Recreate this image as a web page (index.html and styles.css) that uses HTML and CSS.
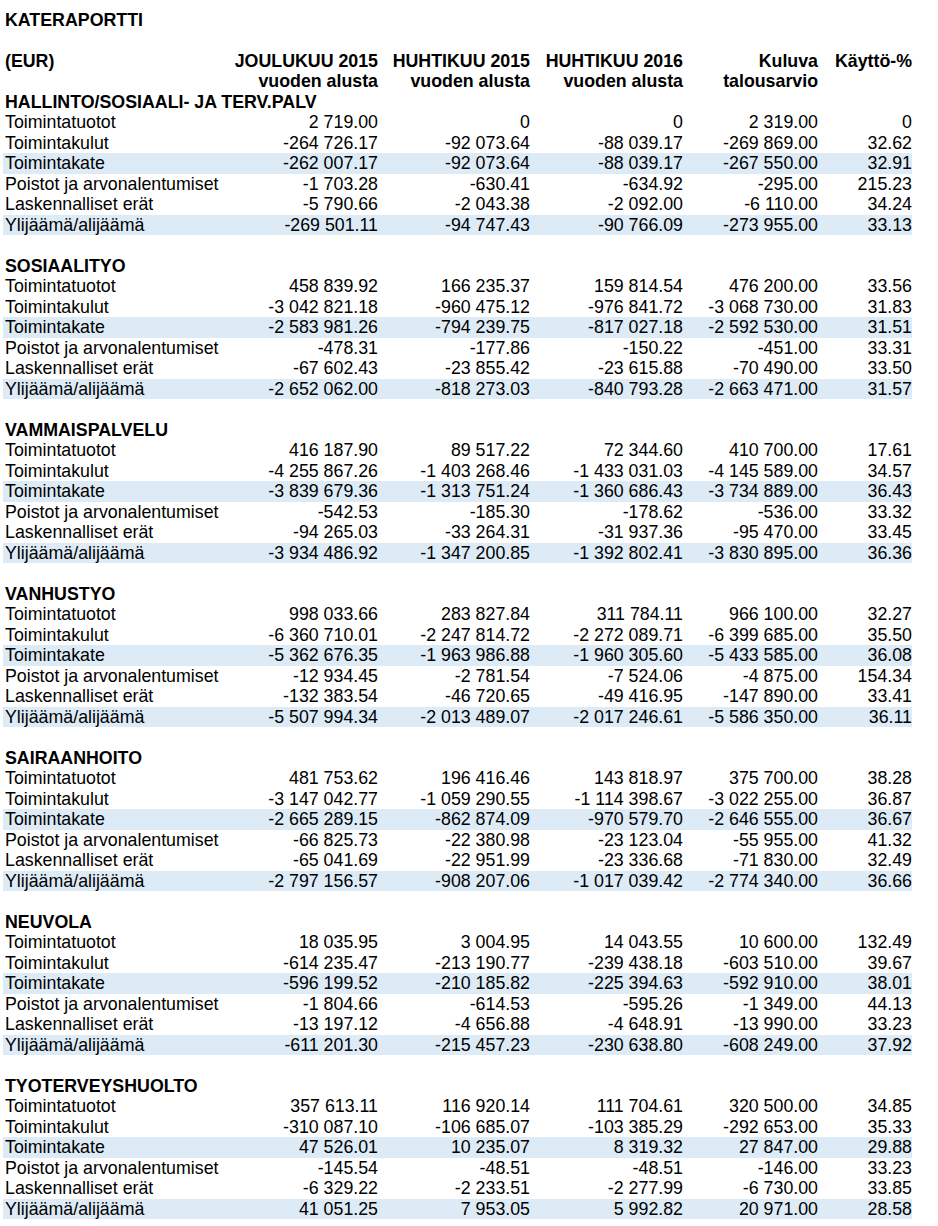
FILE: index.html
```html
<!DOCTYPE html>
<html lang="fi">
<head>
<meta charset="utf-8">
<title>Kateraportti</title>
<link rel="stylesheet" href="styles.css">
</head>
<body>
<table class="report">
<colgroup>
<col class="c-label"><col class="c-dec"><col class="c-apr15"><col class="c-apr16"><col class="c-bud"><col class="c-pct">
</colgroup>
<tbody>
<tr class="b"><td class="lbl" colspan="6">KATERAPORTTI</td></tr>
<tr><td class="lbl" colspan="6"></td></tr>
<tr class="b"><td class="lbl">(EUR)</td><td>JOULUKUU 2015</td><td>HUHTIKUU 2015</td><td>HUHTIKUU 2016</td><td>Kuluva</td><td>Käyttö-%</td></tr>
<tr class="b"><td class="lbl"></td><td>vuoden alusta</td><td>vuoden alusta</td><td>vuoden alusta</td><td>talousarvio</td><td></td></tr>

<tr class="b"><td class="lbl" colspan="6">HALLINTO/SOSIAALI- JA TERV.PALV</td></tr>
<tr><td class="lbl">Toimintatuotot</td><td>2 719.00</td><td>0</td><td>0</td><td>2 319.00</td><td>0</td></tr>
<tr><td class="lbl">Toimintakulut</td><td>-264 726.17</td><td>-92 073.64</td><td>-88 039.17</td><td>-269 869.00</td><td>32.62</td></tr>
<tr class="band"><td class="lbl">Toimintakate</td><td>-262 007.17</td><td>-92 073.64</td><td>-88 039.17</td><td>-267 550.00</td><td>32.91</td></tr>
<tr><td class="lbl">Poistot ja arvonalentumiset</td><td>-1 703.28</td><td>-630.41</td><td>-634.92</td><td>-295.00</td><td>215.23</td></tr>
<tr><td class="lbl">Laskennalliset erät</td><td>-5 790.66</td><td>-2 043.38</td><td>-2 092.00</td><td>-6 110.00</td><td>34.24</td></tr>
<tr class="band"><td class="lbl">Ylijäämä/alijäämä</td><td>-269 501.11</td><td>-94 747.43</td><td>-90 766.09</td><td>-273 955.00</td><td>33.13</td></tr>
<tr><td class="lbl" colspan="6"></td></tr>

<tr class="b"><td class="lbl" colspan="6">SOSIAALITYO</td></tr>
<tr><td class="lbl">Toimintatuotot</td><td>458 839.92</td><td>166 235.37</td><td>159 814.54</td><td>476 200.00</td><td>33.56</td></tr>
<tr><td class="lbl">Toimintakulut</td><td>-3 042 821.18</td><td>-960 475.12</td><td>-976 841.72</td><td>-3 068 730.00</td><td>31.83</td></tr>
<tr class="band"><td class="lbl">Toimintakate</td><td>-2 583 981.26</td><td>-794 239.75</td><td>-817 027.18</td><td>-2 592 530.00</td><td>31.51</td></tr>
<tr><td class="lbl">Poistot ja arvonalentumiset</td><td>-478.31</td><td>-177.86</td><td>-150.22</td><td>-451.00</td><td>33.31</td></tr>
<tr><td class="lbl">Laskennalliset erät</td><td>-67 602.43</td><td>-23 855.42</td><td>-23 615.88</td><td>-70 490.00</td><td>33.50</td></tr>
<tr class="band"><td class="lbl">Ylijäämä/alijäämä</td><td>-2 652 062.00</td><td>-818 273.03</td><td>-840 793.28</td><td>-2 663 471.00</td><td>31.57</td></tr>
<tr><td class="lbl" colspan="6"></td></tr>

<tr class="b"><td class="lbl" colspan="6">VAMMAISPALVELU</td></tr>
<tr><td class="lbl">Toimintatuotot</td><td>416 187.90</td><td>89 517.22</td><td>72 344.60</td><td>410 700.00</td><td>17.61</td></tr>
<tr><td class="lbl">Toimintakulut</td><td>-4 255 867.26</td><td>-1 403 268.46</td><td>-1 433 031.03</td><td>-4 145 589.00</td><td>34.57</td></tr>
<tr class="band"><td class="lbl">Toimintakate</td><td>-3 839 679.36</td><td>-1 313 751.24</td><td>-1 360 686.43</td><td>-3 734 889.00</td><td>36.43</td></tr>
<tr><td class="lbl">Poistot ja arvonalentumiset</td><td>-542.53</td><td>-185.30</td><td>-178.62</td><td>-536.00</td><td>33.32</td></tr>
<tr><td class="lbl">Laskennalliset erät</td><td>-94 265.03</td><td>-33 264.31</td><td>-31 937.36</td><td>-95 470.00</td><td>33.45</td></tr>
<tr class="band"><td class="lbl">Ylijäämä/alijäämä</td><td>-3 934 486.92</td><td>-1 347 200.85</td><td>-1 392 802.41</td><td>-3 830 895.00</td><td>36.36</td></tr>
<tr><td class="lbl" colspan="6"></td></tr>

<tr class="b"><td class="lbl" colspan="6">VANHUSTYO</td></tr>
<tr><td class="lbl">Toimintatuotot</td><td>998 033.66</td><td>283 827.84</td><td>311 784.11</td><td>966 100.00</td><td>32.27</td></tr>
<tr><td class="lbl">Toimintakulut</td><td>-6 360 710.01</td><td>-2 247 814.72</td><td>-2 272 089.71</td><td>-6 399 685.00</td><td>35.50</td></tr>
<tr class="band"><td class="lbl">Toimintakate</td><td>-5 362 676.35</td><td>-1 963 986.88</td><td>-1 960 305.60</td><td>-5 433 585.00</td><td>36.08</td></tr>
<tr><td class="lbl">Poistot ja arvonalentumiset</td><td>-12 934.45</td><td>-2 781.54</td><td>-7 524.06</td><td>-4 875.00</td><td>154.34</td></tr>
<tr><td class="lbl">Laskennalliset erät</td><td>-132 383.54</td><td>-46 720.65</td><td>-49 416.95</td><td>-147 890.00</td><td>33.41</td></tr>
<tr class="band"><td class="lbl">Ylijäämä/alijäämä</td><td>-5 507 994.34</td><td>-2 013 489.07</td><td>-2 017 246.61</td><td>-5 586 350.00</td><td>36.11</td></tr>
<tr><td class="lbl" colspan="6"></td></tr>

<tr class="b"><td class="lbl" colspan="6">SAIRAANHOITO</td></tr>
<tr><td class="lbl">Toimintatuotot</td><td>481 753.62</td><td>196 416.46</td><td>143 818.97</td><td>375 700.00</td><td>38.28</td></tr>
<tr><td class="lbl">Toimintakulut</td><td>-3 147 042.77</td><td>-1 059 290.55</td><td>-1 114 398.67</td><td>-3 022 255.00</td><td>36.87</td></tr>
<tr class="band"><td class="lbl">Toimintakate</td><td>-2 665 289.15</td><td>-862 874.09</td><td>-970 579.70</td><td>-2 646 555.00</td><td>36.67</td></tr>
<tr><td class="lbl">Poistot ja arvonalentumiset</td><td>-66 825.73</td><td>-22 380.98</td><td>-23 123.04</td><td>-55 955.00</td><td>41.32</td></tr>
<tr><td class="lbl">Laskennalliset erät</td><td>-65 041.69</td><td>-22 951.99</td><td>-23 336.68</td><td>-71 830.00</td><td>32.49</td></tr>
<tr class="band"><td class="lbl">Ylijäämä/alijäämä</td><td>-2 797 156.57</td><td>-908 207.06</td><td>-1 017 039.42</td><td>-2 774 340.00</td><td>36.66</td></tr>
<tr><td class="lbl" colspan="6"></td></tr>

<tr class="b"><td class="lbl" colspan="6">NEUVOLA</td></tr>
<tr><td class="lbl">Toimintatuotot</td><td>18 035.95</td><td>3 004.95</td><td>14 043.55</td><td>10 600.00</td><td>132.49</td></tr>
<tr><td class="lbl">Toimintakulut</td><td>-614 235.47</td><td>-213 190.77</td><td>-239 438.18</td><td>-603 510.00</td><td>39.67</td></tr>
<tr class="band"><td class="lbl">Toimintakate</td><td>-596 199.52</td><td>-210 185.82</td><td>-225 394.63</td><td>-592 910.00</td><td>38.01</td></tr>
<tr><td class="lbl">Poistot ja arvonalentumiset</td><td>-1 804.66</td><td>-614.53</td><td>-595.26</td><td>-1 349.00</td><td>44.13</td></tr>
<tr><td class="lbl">Laskennalliset erät</td><td>-13 197.12</td><td>-4 656.88</td><td>-4 648.91</td><td>-13 990.00</td><td>33.23</td></tr>
<tr class="band"><td class="lbl">Ylijäämä/alijäämä</td><td>-611 201.30</td><td>-215 457.23</td><td>-230 638.80</td><td>-608 249.00</td><td>37.92</td></tr>
<tr><td class="lbl" colspan="6"></td></tr>

<tr class="b"><td class="lbl" colspan="6">TYOTERVEYSHUOLTO</td></tr>
<tr><td class="lbl">Toimintatuotot</td><td>357 613.11</td><td>116 920.14</td><td>111 704.61</td><td>320 500.00</td><td>34.85</td></tr>
<tr><td class="lbl">Toimintakulut</td><td>-310 087.10</td><td>-106 685.07</td><td>-103 385.29</td><td>-292 653.00</td><td>35.33</td></tr>
<tr class="band"><td class="lbl">Toimintakate</td><td>47 526.01</td><td>10 235.07</td><td>8 319.32</td><td>27 847.00</td><td>29.88</td></tr>
<tr><td class="lbl">Poistot ja arvonalentumiset</td><td>-145.54</td><td>-48.51</td><td>-48.51</td><td>-146.00</td><td>33.23</td></tr>
<tr><td class="lbl">Laskennalliset erät</td><td>-6 329.22</td><td>-2 233.51</td><td>-2 277.99</td><td>-6 730.00</td><td>33.85</td></tr>
<tr class="band"><td class="lbl">Ylijäämä/alijäämä</td><td>41 051.25</td><td>7 953.05</td><td>5 992.82</td><td>20 971.00</td><td>28.58</td></tr>
</tbody>
</table>
</body>
</html>
```

FILE: styles.css
```css
html, body {
  margin: 0;
  padding: 0;
  background: #ffffff;
}

body {
  padding: 9.5px 0 0 3px;
  font-family: "Liberation Sans", Arial, sans-serif;
  font-size: 17.8px;
  color: #000000;
}

.report {
  border-collapse: collapse;
  border-spacing: 0;
  table-layout: fixed;
  width: 909px;
}

.c-label { width: 220px; }
.c-dec { width: 155px; }
.c-apr15 { width: 152px; }
.c-apr16 { width: 153px; }
.c-bud { width: 135px; }
.c-pct { width: 94px; }

.report td {
  padding: 0;
  height: 20.5px;
  line-height: 20.5px;
  text-align: right;
  white-space: nowrap;
  overflow: visible;
}

.report td.lbl {
  text-align: left;
  padding-left: 2px;
}

.report tr.b td {
  font-weight: bold;
}

.report tr.band td {
  background: #ddebf7;
}
```
